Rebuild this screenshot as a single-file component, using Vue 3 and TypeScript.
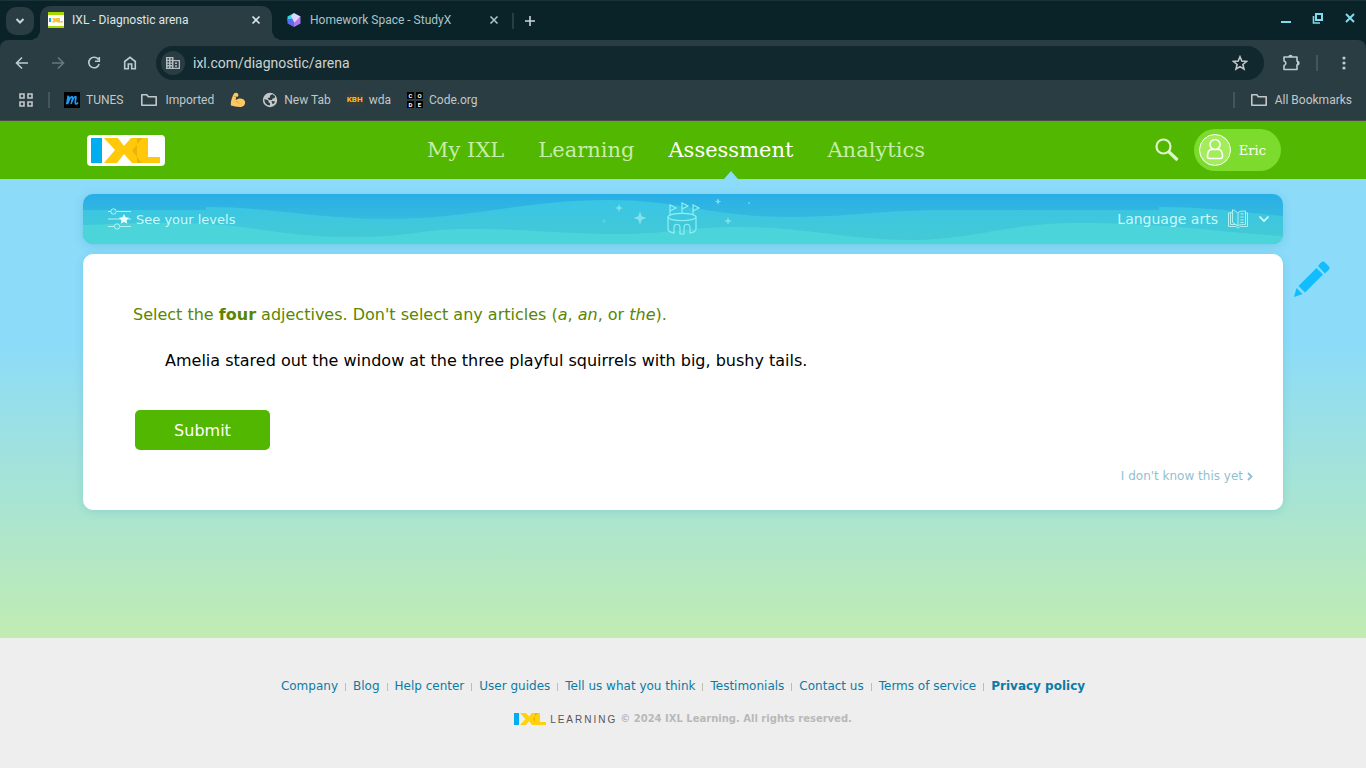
<script setup lang="ts">
import { ref } from 'vue'

interface NavItem { label: string; active?: boolean }
const nav: NavItem[] = [
  { label: 'My IXL' },
  { label: 'Learning' },
  { label: 'Assessment', active: true },
  { label: 'Analytics' },
]
const footerLinks = ['Company', 'Blog', 'Help center', 'User guides', 'Tell us what you think', 'Testimonials', 'Contact us', 'Terms of service', 'Privacy policy']
const address = ref('ixl.com/diagnostic/arena')
</script>

<template>
  <div class="screen">
    <header class="browser">
      <div class="tabstrip">
        <button class="tab-search" aria-label="Search tabs">
          <svg width="10" height="10" viewBox="0 0 10 10"><path d="M1.5 3l3.5 3.500L8.500 3" class="line bold" /></svg>
        </button>
        <div class="tab active">
          <svg width="16" height="16" viewBox="0 0 16 16">
            <path fill="#fff" d="M0 0h16v16H0z" /><path fill="#a5d900" d="M0 0h16v3H0zM0 14h16v2H0z" />
            <path fill="#1ba9dd" d="M1 6h2v4H1z" />
            <path fill="#f5c33a" d="M4 6h2.500L7.500 7 8.500 6H12v3h3v1.500H9.500L7.500 9.500 6.500 10.500H4L5.500 8z" />
          </svg>
          <span class="tab-title">IXL - Diagnostic arena</span>
          <button class="close" aria-label="Close tab"><svg width="10" height="10" viewBox="0 0 10 10"><path d="M1.500 1.500l7 7M8.500 1.500l-7 7" class="line" /></svg></button>
        </div>
        <div class="tab">
          <svg width="16" height="16" viewBox="0 0 16 16">
            <path fill="#35d5e6" d="M8 1L1.500 4.500V9L6 8z" /><path fill="#5b6bf0" d="M1.500 7v4.500L8 15V7z" />
            <path fill="#e3d3ff" d="M8 1l6.500 3.500L9 12 5 4z" /><path fill="#a978f2" d="M14.500 4.500v7L8 15v-4z" />
          </svg>
          <span class="tab-title">Homework Space - StudyX</span>
          <button class="close" aria-label="Close tab"><svg width="10" height="10" viewBox="0 0 10 10"><path d="M1.500 1.500l7 7M8.500 1.500l-7 7" class="line" /></svg></button>
        </div>
        <span class="rule"></span>
        <button class="new-tab" aria-label="New tab"><svg width="12" height="12" viewBox="0 0 12 12"><path d="M6 1v10M1 6h10" class="line" /></svg></button>
        <div class="window-controls">
          <button aria-label="Minimize"><svg width="12" height="12" viewBox="0 0 12 12"><path d="M1 10h10" class="line bold" /></svg></button>
          <button aria-label="Restore"><svg width="12" height="12" viewBox="0 0 12 12"><path d="M4 2h6v6H4z" class="line bold" /><path d="M1.500 4v7H8" class="line" /></svg></button>
          <button aria-label="Close"><svg width="12" height="12" viewBox="0 0 12 12"><path d="M2 2l8 8M10 2l-8 8" class="line bold" /></svg></button>
        </div>
      </div>

      <div class="toolbar">
        <button class="tool" aria-label="Back"><svg width="16" height="16" viewBox="0 0 16 16"><path d="M14 8H3M8 2.500L2.500 8 8 13.500" class="line" /></svg></button>
        <button class="tool dim" aria-label="Forward"><svg width="16" height="16" viewBox="0 0 16 16"><path d="M2 8h11M8 2.500L13.500 8 8 13.500" class="line" /></svg></button>
        <button class="tool" aria-label="Reload"><svg width="16" height="16" viewBox="0 0 16 16"><path d="M12.500 4.500A5.300 5.300 0 1 0 13.200 9M13.300 2v4.200H9" class="line" /></svg></button>
        <button class="tool" aria-label="Home"><svg width="16" height="16" viewBox="0 0 16 16"><path d="M2.700 6.500L8 2.300l5.300 4.200v7.200H9.700V9H6.300v4.700H2.700z" class="line" /></svg></button>
        <div class="omnibox">
          <button class="site" aria-label="Site information"><svg width="14" height="14" viewBox="0 0 14 14"><path fill="currentColor" fill-rule="evenodd" d="M0 1h7.500v3H14v9H0zM1.500 2.300v1.400h1.500V2.300zM4.500 2.300v1.400H6V2.300zM1.500 5v1.400h1.500V5zM4.500 5v1.400H6V5zM1.500 7.700v1.400h1.500V7.700zM4.500 7.700v1.400H6V7.700zM1.500 10.400v1.400h1.500v-1.400zM4.500 10.400v1.400H6v-1.400zM7.500 5.300v6.500h5.200V5.300z" /><path d="M9 6.500h2V8H9zM9 9.200h2v1.500H9z" fill="currentColor" /></svg></button>
          <input v-model="address" aria-label="Address" />
          <button class="star" aria-label="Bookmark this page"><svg width="16" height="16" viewBox="0 0 16 16"><path d="M8 1.800l1.800 4.300 4.700.400-3.600 3 1.100 4.600L8 11.600l-4 2.500 1.100-4.600-3.600-3 4.700-.4z" class="line" /></svg></button>
        </div>
        <button class="tool" aria-label="Extensions"><svg width="18" height="18" viewBox="0 0 18 18"><path d="M2 3h13v4.200a1.500 1.500 0 0 1 0 3.600V15.500H2v-4a2.300 2.300 0 0 0 0-4.500z" class="line" stroke-linejoin="round" /><path d="M6.300 3a2.200 2.200 0 0 1 4.400 0zM15 6.800a2.200 2.200 0 0 1 0 4.400z" fill="currentColor" /></svg></button>
        <span class="rule"></span>
        <button class="tool" aria-label="Menu"><svg width="16" height="16" viewBox="0 0 16 16" fill="currentColor"><circle cx="8" cy="3" r="1.600" /><circle cx="8" cy="8" r="1.600" /><circle cx="8" cy="13" r="1.600" /></svg></button>
      </div>

      <nav class="bookmarks" aria-label="Bookmarks">
        <button class="apps" aria-label="Apps"><svg width="16" height="16" viewBox="0 0 16 16"><path d="M2 2h4v4H2zM10 2h4v4h-4zM2 10h4v4H2zM10 10h4v4h-4z" class="line" /></svg></button>
        <span class="rule"></span>
        <a href="#" class="mark tunes"><svg width="16" height="16" viewBox="0 0 16 16"><path fill="#000" d="M0 0h16v16H0z" /><path d="M2 12c1-.2 1.500-3 2-7.500 1.500-.5 1 4-.5 7.500 1.500-4 3-7.500 4.500-7.500 1.200 0 0 5-1 7.500 1.500-4 3-7.500 4.500-7.500 1.500 0-1.500 7 .3 7.500.8 0 1.500-.5 2.200-1.500" fill="none" stroke="#1d9bf0" stroke-width="1.700" /></svg>TUNES</a>
        <a href="#" class="mark folder"><svg width="16" height="16" viewBox="0 0 16 16"><path d="M.8 2.800h5l1.500 2h7.900v8.400H.8z" class="line" stroke-linejoin="round" /></svg>Imported</a>
        <a href="#" class="mark" aria-label="Fitness"><svg width="16" height="16" viewBox="0 0 16 16"><path fill="#fdc861" d="M4.500 1L7 .8l1.500 2L8 4.500l-2 .7-.3 2.800C9 5.500 14 6 15 9.500c.6 3-1.300 5.500-5 5.500-4 0-6-1-9-1.500C0 11 2.500 3 4.500 1z" /><path d="M5.500 9.500c2 0 3 1 3.500 2M4 4.500h3" fill="none" stroke="#e0a040" /></svg></a>
        <a href="#" class="mark"><svg width="16" height="16" viewBox="0 0 16 16"><circle cx="8" cy="8" r="7.200" fill="#c4c7c8" /><path fill="#293d42" d="M2.500 7l4 1.500v1.800l1.500 1v2.200C4.500 13.500 2 10.500 2.500 7zM8 3.500l2.500-1.200 2.500 2-.5 2-2 .2L10 8H7L5.500 6 8 5.500zM9.500 9l3.500.5-1 2-1.500.5z" /></svg>New Tab</a>
        <a href="#" class="mark"><span class="kbh" aria-hidden="true">KBH</span>wda</a>
        <a href="#" class="mark"><span class="code" aria-hidden="true"><i>C</i><i>O</i><i>D</i><i>E</i></span>Code.org</a>
        <span class="rule push"></span>
        <a href="#" class="mark folder"><svg width="16" height="16" viewBox="0 0 16 16"><path d="M.8 2.800h5l1.500 2h7.900v8.400H.8z" class="line" stroke-linejoin="round" /></svg>All Bookmarks</a>
      </nav>
    </header>

    <div class="site-bar">
      <a href="#" class="logo" aria-label="IXL">
        <svg width="78" height="31" viewBox="0 0 78 31">
          <rect width="78" height="31" rx="4" fill="#fff" /><path fill="#00aeef" d="M4 3h11v25H4z" />
          <path fill="#ffc80a" d="M17 3h14l6 8 7-8h17v19h12v6H45l-8-9-7 9H17l11-13z" /><path fill="#e9b408" d="M50 3h5.500L50 9zM50 10l-5 5.500 5 6.500zM50 22v6h5z" />
        </svg>
      </a>
      <nav class="main-nav" aria-label="Main">
        <a v-for="item in nav" :key="item.label" href="#" :class="{ active: item.active }">{{ item.label }}</a>
      </nav>
      <div class="user">
        <button class="search" aria-label="Search"><svg width="24" height="24" viewBox="0 0 24 24" fill="none" stroke="#e0f5c8"><circle cx="8.500" cy="8.500" r="7" stroke-width="2.200" /><path d="M13.500 13.500l9 8.500" stroke-width="3.200" /></svg></button>
        <button class="account">
          <svg width="32" height="32" viewBox="0 0 32 32" fill="none" stroke="#fff"><circle cx="16" cy="16" r="15.500" fill="#a3ec5c" /><circle cx="16" cy="10.500" r="5" stroke-width="1.600" /><path d="M11.500 15.500h9c2 1 3 4 3 7 0 1.500-.8 2-2 2h-11c-1.200 0-2-.5-2-2 0-3 1-6 3-7z" stroke-width="1.600" /></svg>
          Eric
        </button>
      </div>
    </div>

    <main class="arena">
      <section class="banner">
        <svg class="waves" viewBox="0 0 1200 50" preserveAspectRatio="none" aria-hidden="true">
          <defs>
            <linearGradient id="sky" x1="0" y1="0" x2="0" y2="50" gradientUnits="userSpaceOnUse"><stop offset="0" stop-color="#28aee6" /><stop offset=".5" stop-color="#36badf" /></linearGradient>
            <linearGradient id="sea" x1="0" y1="0" x2="0" y2="50" gradientUnits="userSpaceOnUse"><stop offset=".15" stop-color="#39c5e5" /><stop offset=".85" stop-color="#43c9d6" /></linearGradient>
          </defs>
          <path fill="url(#sky)" d="M0 0h1200v50H0z" />
          <path fill="url(#sea)" d="M0 16h123v-3c65 0 110 12 180 12 90 0 135-19 222-19 75 0 100 17 181 17 60 0 90-7 163-7h207v-3c50 0 90 6 124 9v28H0z" />
          <path fill="#4bd5db" d="M0 31c50-2 85-3 125-1 60 4 80 13 147 13 55 0 65-8 115-8 60 0 95 5 150 5 45 0 70-7 118-7 70 0 110 13 172 13 65 0 95-17 170-17 90 0 145 10 203 13v8H0z" />
        </svg>
        <button class="levels">
          <svg width="24" height="22" viewBox="0 0 24 22" fill="none" stroke="#b5f2f4"><path d="M0 3.500h3M9 3.500h14M0 11h23M0 18.500h6M12 18.500h11" /><circle cx="5.500" cy="3.500" r="2.700" /><circle cx="9" cy="18.500" r="2.700" /><path fill="#e4ffff" stroke="none" d="M16 6l1.600 3.300 3.600.4-2.600 2.500.7 3.600-3.300-1.800-3.200 1.800.6-3.600-2.600-2.500 3.600-.4z" /></svg>
          See your levels
        </button>
        <svg class="castle" width="164" height="42" viewBox="0 0 164 42" fill="none" stroke="#8feff0" stroke-width="1.200" aria-hidden="true">
          <ellipse cx="81" cy="19" rx="14" ry="3.700" /><path d="M67 19v12c0 2 3 3.500 6 4v-5c0-5 6-5 6 0v6h4v-6c0-5 6-5 6 0v5c3-.5 6-2 6-4V19M69 17V7l6 3-6 3M81 15V5l6 3-6 3M92 17V7l6 3-6 3" />
          <path fill="#8de5ee" stroke="none" d="M39 13.500l1.700 4.800 4.800 1.700-4.800 1.700-1.700 5-1.700-5-4.800-1.700 4.800-1.700zM18 6l1 3 3 1-3 1-1 3-1-3-3-1 3-1zM117 0l1 2.700 2.500.8-2.500.8-1 2.700-1-2.700-2.500-.8 2.500-.8zM127 19l1 3 3 1-3 1-1 3-1-3-3-1 3-1z" opacity=".85" /><path fill="#8de5ee" stroke="none" opacity=".5" d="M3 20l.6 2.400L6 23l-2.400.6L3 26l-.6-2.400L0 23l2.400-.6zM147 4h2v2h-2z" />
        </svg>
        <button class="subject">
          Language arts
          <svg width="20" height="20" viewBox="0 0 20 20" fill="none" stroke="#aef0f0"><path d="M4.500 3.500L.5 4v13.500h7c1 0 2 1.500 3 1.500s1-1.500 2-1.500h7V4l-2-.3M10 4c1-2 4-2 7.500-2v13.500c-3 0-6.500 0-7.500 1.500L4.500 13.500V.8C6 1 9 3 10 4.500V17M2.500 4v11.500h6M12.500 5h3M12.500 8h3M12.500 11h3M12.500 13.500h3" /></svg>
          <svg width="12" height="8" viewBox="0 0 12 8"><path d="M1.500 1.500L6 6l4.500-4.500" fill="none" stroke="#d7ffff" stroke-width="1.700" /></svg>
        </button>
      </section>

      <section class="card">
        <p class="prompt">Select the <b>four</b> adjectives. Don't select any articles (<i>a</i>, <i>an</i>, or <i>the</i>).</p>
        <p class="sentence">Amelia stared out the window at the three playful squirrels with big, bushy tails.</p>
        <button class="submit">Submit</button>
        <a href="#" class="skip">I don't know this yet <svg width="6" height="9" viewBox="0 0 6 9"><path d="M1 1l3.500 3.500L1 8" fill="none" stroke="currentColor" stroke-width="1.800" /></svg></a>
        <button class="scratch" aria-label="Scratchpad"><svg width="38" height="38" viewBox="0 0 38 38" fill="#12bdff"><path d="M28 2.500q2-2 4 0l3.500 3.500q2 2 0 4L32 13.500 25 6zM23.500 8l6.500 6.500L12 32.500 5.500 26zM3.500 28l6 6L1 37z" /></svg></button>
      </section>
    </main>

    <footer>
      <nav class="foot-links" aria-label="Footer">
        <a v-for="link in footerLinks" :key="link" href="#">{{ link }}</a>
      </nav>
      <div class="legal">
        <svg width="33" height="12" viewBox="0 0 33 12"><path fill="#00aeef" d="M0 0h5v12H0z" /><path fill="#ffd20a" d="M6 0h6l3 3.500L18 0h8v9h6v3H18l-3-4-3 4H6l5.500-6z" /><path fill="#e9b408" d="M21 0h3l-3 3zM21 3v6l-2-3z" /></svg>
        <span class="learning">LEARNING</span>
        <span>© 2024 IXL Learning. All rights reserved.</span>
      </div>
    </footer>
  </div>
</template>

<style>
body { margin: 0; }
</style>

<style scoped>
* { box-sizing: border-box; }
.screen { min-height: 100vh; display: flex; flex-direction: column; font-family: "DejaVu Sans", Verdana, sans-serif; background: #eee; }
button { border: 0; padding: 0; margin: 0; background: none; color: inherit; font: inherit; display: flex; align-items: center; justify-content: center; }
a { color: inherit; text-decoration: none; }
p { margin: 0; }
svg { display: block; flex: none; }
.line { fill: none; stroke: currentColor; stroke-width: 1.600; }
.line.bold { stroke-width: 2; }
.rule { width: 2px; height: 16px; background: #42575d; flex: none; }

.browser { background: #0a2329; color: #c4c7c8; font: 12px Roboto, sans-serif; border-bottom: 1px solid #494b50; }
.tabstrip { height: 40px; border-top: 1px solid #1b3338; display: flex; align-items: center; padding: 0 10px 0 6px; color: #c9d6d8; }
.tab-search { width: 28px; height: 28px; border-radius: 10px; background: #293d42; margin-right: 6px; }
.tab { position: relative; align-self: flex-end; width: 234px; height: 34px; display: flex; align-items: center; gap: 8px; padding: 0 6px 6px 14px; color: #a9c4c9; }
.tab.active { width: 232px; background: #293d42; border-radius: 10px 10px 0 0; padding: 0 10px 6px 8px; color: #dfe6e7; }
.tab.active::before, .tab.active::after { content: ""; position: absolute; bottom: 0; width: 10px; height: 10px; }
.tab.active::before { right: 100%; background: radial-gradient(circle at 0 0, transparent 10px, #293d42 10px); }
.tab.active::after { left: 100%; background: radial-gradient(circle at 100% 0, transparent 10px, #293d42 10px); }
.tab-title { flex: 1; white-space: nowrap; }
.close { width: 12px; height: 20px; }
.tabstrip .rule { margin-left: 6px; background: #293d42; }
.new-tab { width: 32px; height: 28px; }
.window-controls { margin-left: auto; display: flex; gap: 20px; color: #7fdcec; margin-bottom: 5px; }
.toolbar { height: 46px; display: flex; align-items: center; padding: 0 14px; gap: 20px; color: #b9ced2; background: #293d42; border-radius: 8px 8px 0 0; }
.tool.dim { color: #647a7f; }
.toolbar .rule { margin: 0 -2px 0 -4px; }
.omnibox { flex: 1; height: 34px; border-radius: 17px; background: #11292e; display: flex; align-items: center; padding: 0 16px 0 5px; gap: 8px; margin: 0 -2px; }
.site { width: 24px; height: 24px; border-radius: 12px; background: #293d42; color: #b0bcbe; }
.omnibox input { flex: 1; min-width: 0; background: none; border: 0; padding: 0; outline: 0; color: #cdd3d4; font: 14px Roboto, sans-serif; }
.star { color: #c4c7c8; }
.bookmarks { height: 34px; display: flex; align-items: center; padding: 0 14px 6px 18px; gap: 16px; background: #293d42; }
.mark { display: flex; align-items: center; gap: 6px; white-space: nowrap; }
.mark.folder { gap: 8px; }
.mark.tunes { margin: 0 2px 0 -2px; }
.apps { color: #c4c7c8; margin-right: -2px; }
.kbh { width: 16px; background: #3b3c36; color: #ffc107; font: bold 8px/12px Roboto, sans-serif; text-align: center; }
.code { display: grid; grid-template-columns: 7px 7px; gap: 2px; }
.code i { height: 7px; background: #000; color: #fff; font: bold 6px/7px Roboto, sans-serif; text-align: center; }
.push { margin-left: auto; }

.site-bar { height: 58px; background: #52b700; display: grid; grid-template-columns: 1fr auto 1fr; align-items: center; padding: 0 85px 0 87px; }
.main-nav { display: flex; gap: 34px; height: 58px; margin-right: 16px; font: 21px "Roboto Slab", "DejaVu Serif", serif; color: #c6edaa; }
.main-nav a { position: relative; line-height: 58px; }
.main-nav .active { color: #fff; }
.main-nav .active::after { content: ""; position: absolute; left: 50%; bottom: 0; margin-left: -7px; border: 7px solid transparent; border-top: 0; border-bottom: 8px solid #8bdbf9; }
.user { justify-self: end; display: flex; align-items: center; gap: 15px; }
.account { height: 42px; border-radius: 21px; background: #7ddb2d; color: #fff; padding: 0 15px 0 5px; gap: 8px; font: 13px "Roboto Slab", "DejaVu Serif", serif; }

.arena { min-height: 459px; background: linear-gradient(#8bdbf9 0, #8bdbf9 35%, #c1ecb2 100%); padding: 15px 83px 0; }
.banner { position: relative; height: 50px; border-radius: 10px; overflow: hidden; box-shadow: 0 2px 8px #2f98bd44; color: #c8fbfa; display: grid; grid-template-columns: 1fr auto 1fr; align-items: center; padding: 0 13px; }
.waves { position: absolute; inset: 0; width: 100%; height: 100%; }
.banner > :not(.waves) { position: relative; }
.levels { justify-self: start; gap: 4px; margin-left: 12px; font-size: 13px; }
.subject { justify-self: end; gap: 10px; font-size: 14px; }
.card { position: relative; margin-top: 10px; background: #fff; border-radius: 10px; box-shadow: 0 2px 8px #2f98bd33; padding: 51px 30px 24px 50px; display: flex; flex-direction: column; align-items: flex-start; font-size: 16px; line-height: 20px; }
.prompt { color: #5a8600; }
.sentence { margin: 26px 0 39px 32px; }
.submit { width: 135px; height: 40px; margin-left: 2px; padding-top: 2px; border-radius: 5px; background: #52b700; color: #fff; }
.skip { align-self: flex-end; margin-top: 16px; display: flex; align-items: center; gap: 4px; color: #92bfcf; font-size: 12px; }
.scratch { position: absolute; left: 100%; top: 6px; margin-left: 10px; }

footer { flex: 1; background: #eee; display: flex; flex-direction: column; align-items: center; padding-top: 40px; font-size: 12px; line-height: 16px; }
.foot-links { display: flex; color: #0c7ba5; white-space: nowrap; }
.foot-links a + a::before { content: ""; display: inline-block; width: 1px; height: 8px; margin: 0 7px; background: #bdbdb0; vertical-align: -1px; }
.foot-links a:last-child { font-weight: bold; }
.legal { display: flex; align-items: center; gap: 3px; margin-top: 17px; color: #b9b9b9; font-size: 10px; font-weight: bold; }
.learning { font: 10px "Liberation Sans", sans-serif; letter-spacing: 2px; color: #555; }
</style>
